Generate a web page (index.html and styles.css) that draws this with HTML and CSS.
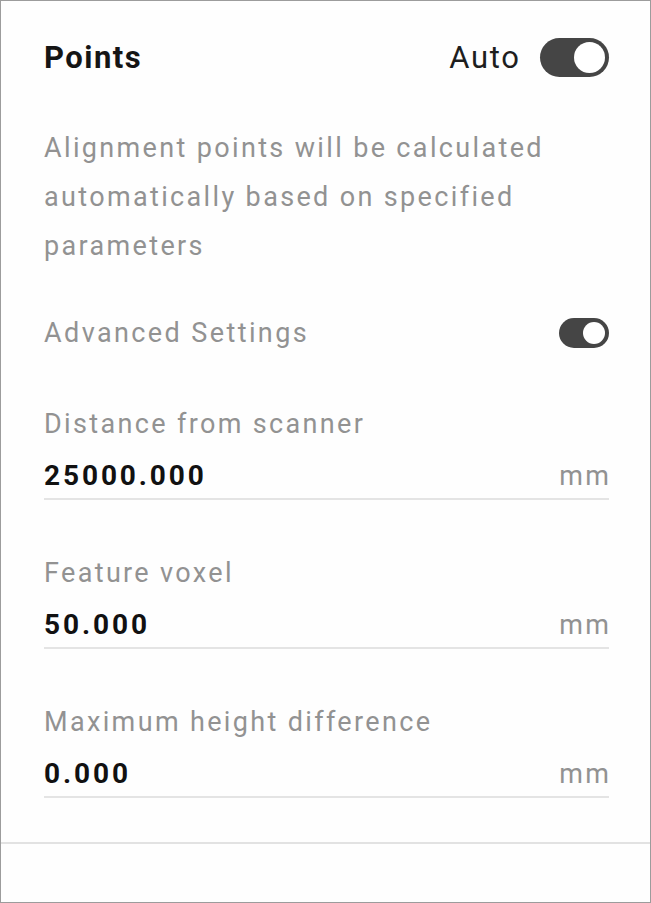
FILE: index.html
```html
<!DOCTYPE html>
<html>
<head>
<meta charset="utf-8">
<link rel="stylesheet" href="styles.css">
</head>
<body>
<div class="panel">
  <div class="content">
    <div class="header">
      <h1 class="title">Points</h1>
      <div class="auto">
        <span class="auto-label">Auto</span>
        <span class="toggle toggle-lg"><span class="knob"></span></span>
      </div>
    </div>
    <p class="desc">Alignment points will be calculated automatically based on specified parameters</p>
    <div class="adv-row">
      <span class="adv-label">Advanced Settings</span>
      <span class="toggle toggle-sm"><span class="knob"></span></span>
    </div>
    <div class="field">
      <div class="field-label">Distance from scanner</div>
      <div class="field-input">
        <span class="field-value">25000.000</span>
        <span class="field-unit">mm</span>
      </div>
    </div>
    <div class="field">
      <div class="field-label">Feature voxel</div>
      <div class="field-input">
        <span class="field-value">50.000</span>
        <span class="field-unit">mm</span>
      </div>
    </div>
    <div class="field">
      <div class="field-label">Maximum height difference</div>
      <div class="field-input">
        <span class="field-value">0.000</span>
        <span class="field-unit">mm</span>
      </div>
    </div>
  </div>
  <div class="separator"></div>
</div>
</body>
</html>
```
FILE: styles.css
```css
html, body {
  margin: 0;
  padding: 0;
  background: #ffffff;
}
body {
  font-family: Roboto, "Liberation Sans", sans-serif;
}
.panel {
  width: 651px;
  height: 903px;
  box-sizing: border-box;
  border: 1px solid #9c9c9c;
  background: #fefefe;
  display: flex;
  flex-direction: column;
}
.content {
  padding: 37px 41px 0 43px;
  height: 804px;
  box-sizing: border-box;
}
.header {
  display: flex;
  justify-content: space-between;
  align-items: center;
  height: 39px;
}
.title {
  margin: 0;
  font-size: 31px;
  font-weight: 700;
  color: #151515;
  letter-spacing: 1.5px;
}
.auto {
  display: flex;
  align-items: center;
  gap: 21px;
}
.auto-label {
  font-size: 31px;
  color: #1e1e1e;
  letter-spacing: 1.7px;
  margin-right: -1.7px;
}
.toggle {
  display: inline-flex;
  align-items: center;
  justify-content: flex-end;
  background: #454545;
  box-sizing: border-box;
}
.toggle-lg {
  width: 69px;
  height: 39px;
  border-radius: 20px;
  padding-right: 4px;
}
.toggle-lg .knob {
  width: 31px;
  height: 31px;
}
.toggle-sm {
  width: 50px;
  height: 30px;
  border-radius: 15px;
  padding-right: 4px;
}
.toggle-sm .knob {
  width: 22px;
  height: 22px;
}
.knob {
  display: block;
  border-radius: 50%;
  background: #ffffff;
}
.desc {
  margin: 47px 0 0;
  font-size: 27px;
  line-height: 49px;
  color: #929292;
  letter-spacing: 2.35px;
}
.adv-row {
  margin-top: 47px;
  display: flex;
  justify-content: space-between;
  align-items: center;
  height: 30px;
}
.adv-label {
  font-size: 27px;
  color: #929292;
  letter-spacing: 2.4px;
}
.field {
  border-bottom: 2px solid #e4e4e4;
  padding-bottom: 4px;
}
.adv-row + .field {
  margin-top: 58px;
}
.field + .field {
  margin-top: 55px;
}
.field-label {
  font-size: 27px;
  line-height: 36px;
  color: #929292;
  letter-spacing: 2.35px;
}
.field-input {
  margin-top: 16px;
  display: flex;
  justify-content: space-between;
  align-items: baseline;
  line-height: 36px;
}
.field-value {
  font-size: 28px;
  font-weight: 700;
  color: #111111;
  letter-spacing: 2.9px;
}
.field-unit {
  font-size: 27px;
  color: #929292;
  letter-spacing: 2.4px;
  margin-right: -2.4px;
}
.separator {
  height: 2px;
  background: #e2e2e2;
  margin-top: 37px;
}
```
